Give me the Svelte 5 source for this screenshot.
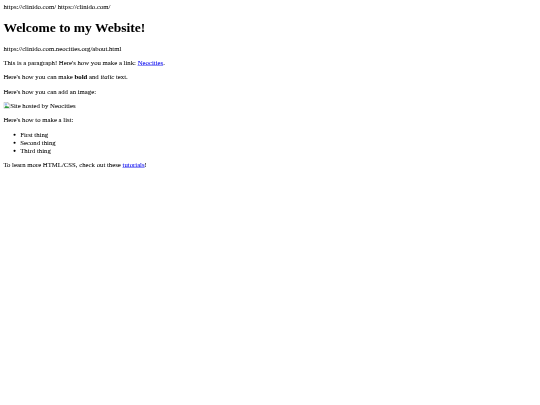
<script>
  const items = ["First thing", "Second thing", "Third thing"];
</script>

<div class="page">
  <div>https://clinido.com/ https://clinido.com/</div>
  <h1>Welcome to my Website!</h1>
  <p>https://clinido.com.neocities.org/about.html</p>
  <p>This is a paragraph! Here's how you make a link: <a href="#neocities">Neocities</a>.</p>
  <p>Here's how you can make <strong>bold</strong> and <em>italic</em> text.</p>
  <p>Here's how you can add an image:</p>
  <p class="broken">
    <svg width="16" height="16" viewBox="0 0 16 16" aria-hidden="true">
      <path d="M1 1h10l4 4v10H1z" fill="#fff" stroke="#8c8c8c" />
      <path d="M11 1v4h4" fill="#ddd" stroke="#8c8c8c" />
      <path d="M3 3h6v5H3z" fill="#9dbdf0" />
      <path d="M2 14l4-6 3 3 2-2 3 5z" fill="#2f9a3a" />
    </svg>Site hosted by Neocities
  </p>
  <p>Here's how to make a list:</p>
  <ul>
    {#each items as item}
      <li>{item}</li>
    {/each}
  </ul>
  <p>To learn more HTML/CSS, check out these <a href="#tutorials">tutorials</a>!</p>
</div>

<style>
  :global(body) {
    background: #fff;
  }

  /* the source page is a 1280px wide capture, shrunk to 540 */
  .page {
    width: 1280px;
    box-sizing: border-box;
    padding: 7px 8px;
    color: #000;
    font-family: "Liberation Serif", "Times New Roman", serif;
    font-size: 16px;
    line-height: 19px;
    -webkit-text-stroke: 0.08px #000;
    transform: scale(0.421875);
    transform-origin: 0 0;
    filter: blur(0.45px);
  }

  h1 {
    font-size: 32px;
    line-height: 37px;
    margin: 21px 0;
  }

  p {
    margin: 15px 0;
  }

  ul {
    margin: 15px 0;
    padding-left: 40px;
  }

  a {
    color: #0000ee;
    -webkit-text-stroke-color: #0000ee;
  }

  .broken svg {
    vertical-align: -2px;
  }
</style>
